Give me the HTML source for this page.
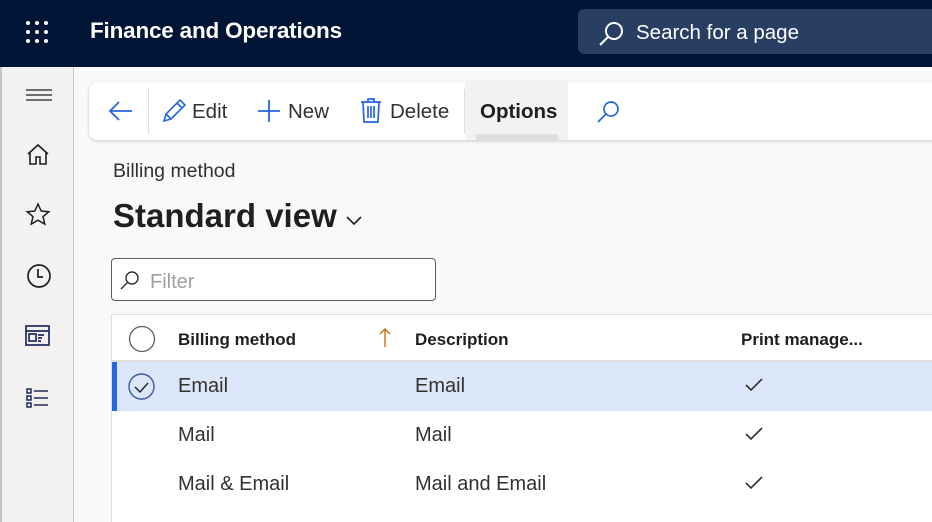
<!DOCTYPE html>
<html><head><style>
*{margin:0;padding:0;box-sizing:border-box}
html,body{width:932px;height:522px;overflow:hidden}
body{background:#faf9f8;font-family:"Segoe UI","Liberation Sans",sans-serif;position:relative;color:#201f1e}
.hdr{position:absolute;left:0;top:0;width:932px;height:67px;background:#001535}
.title{position:absolute;left:90px;top:18px;color:#fff;font-size:22.5px;font-weight:bold;letter-spacing:-0.2px}
.search{position:absolute;left:578px;top:9px;width:360px;height:45px;background:#283f63;border-radius:6px}
.search span{position:absolute;left:58px;top:12px;color:#fff;font-size:20.5px}
.side{position:absolute;left:0;top:67px;width:74px;height:455px;background:#f3f2f1;border-right:1px solid #c8c6c4;border-left:2px solid #c8c6c4}
.tb{position:absolute;left:89px;top:82px;width:860px;height:58px;background:#fff;border-radius:8px 0 0 8px;box-shadow:0 1px 3px rgba(0,0,0,.2)}
.tb .t{position:absolute;top:18px;font-size:20.5px;color:#323130}
.opt{position:absolute;left:376px;top:0;width:103px;height:58px;background:#f3f2f1}
.opt span{position:absolute;left:15px;top:18px;font-size:20.5px;font-weight:bold;color:#201f1e}
.opt i{position:absolute;left:11px;bottom:0;width:82px;height:6px;background:#e1dfdd}
.sep{position:absolute;top:7px;width:1px;height:45px;background:#e1dfdd}
.lbl{position:absolute;left:113px;top:160px;font-size:19.5px;color:#323130}
.view{position:absolute;left:113px;top:197px;font-size:33px;font-weight:bold;color:#201f1e}
.filter{position:absolute;left:111px;top:258px;width:325px;height:43px;border:1px solid #605e5c;border-radius:4px;background:#fff}
.filter span{position:absolute;left:38px;top:12px;font-size:20px;color:#a19f9d}
.grid{position:absolute;left:111px;top:314px;width:830px;height:220px;background:#fff;border-left:1px solid #e1dfdd;border-top:1px solid #e1dfdd}
.row{position:absolute;left:0;width:830px;height:49px}
.row span{position:absolute;top:13px;font-size:20px;color:#323130}
.hrow{top:0;height:47px;border-bottom:2px solid #e1dfdd}
.hrow span{font-weight:bold;font-size:17px;top:15px;color:#201f1e}
.sel{background:#dbe6f8}
.sel:before{content:"";position:absolute;left:0;top:0;width:5px;height:49px;background:#2266e3}
.chk{position:absolute;left:632px;top:15px}
</style></head><body>
<div class="hdr">
<svg style="position:absolute;left:25px;top:20px" width="24" height="24" viewBox="0 0 24 24" fill="#fff"><circle cx="3" cy="3" r="2"/><circle cx="12" cy="3" r="2"/><circle cx="21" cy="3" r="2"/><circle cx="3" cy="12" r="2"/><circle cx="12" cy="12" r="2"/><circle cx="21" cy="12" r="2"/><circle cx="3" cy="21" r="2"/><circle cx="12" cy="21" r="2"/><circle cx="21" cy="21" r="2"/></svg>
<div class="title">Finance and Operations</div>
<div class="search"><svg style="position:absolute;left:20px;top:12px" width="26" height="26" viewBox="0 0 26 26" fill="none" stroke="#fff" stroke-width="2"><circle cx="16" cy="10" r="8"/><path d="M10 16 2 24"/></svg><span>Search for a page</span></div>
</div>
<div class="side">
<svg style="position:absolute;left:24px;top:22px" width="26" height="12" stroke="#201f1e" stroke-width="1.3"><path d="M0 1h26M0 6h26M0 11h26"/></svg>
<svg style="position:absolute;left:24px;top:76px" width="24" height="22" fill="none" stroke="#201f1e" stroke-width="1.6"><path d="M2 11 12 2l10 9M4 9v12h6v-7h4v7h6V9"/></svg>
<svg style="position:absolute;left:23px;top:135px" width="26" height="24" fill="none" stroke="#201f1e" stroke-width="1.5"><path d="M13 2l3.2 7 7.6.7-5.8 5 1.8 7.4L13 18.2 6.2 22.1 8 14.7 2.2 9.7 9.8 9z"/></svg>
<svg style="position:absolute;left:24px;top:196px" width="26" height="26" fill="none" stroke="#201f1e" stroke-width="1.7"><circle cx="13" cy="13" r="11"/><path d="M12 6v8h5"/></svg>
<svg style="position:absolute;left:23px;top:258px" width="26" height="22" fill="none" stroke="#1f2a5c" stroke-width="1.7"><rect x="1" y="1" width="23" height="19"/><path d="M1 6h23"/><rect x="4" y="9" width="7" height="7"/><path d="M13 10h6M13 13h4M13 16h3"/></svg>
<svg style="position:absolute;left:23px;top:320px" width="26" height="24" fill="none" stroke="#1f2a5c" stroke-width="1.5"><rect x="2" y="2" width="4" height="4"/><rect x="2" y="9" width="4" height="4"/><rect x="2" y="16" width="4" height="4"/><path d="M9 4h14M9 11h14M9 18h14"/></svg>
</div>
<div class="tb">
<svg style="position:absolute;left:18px;top:17px" width="26" height="24" fill="none" stroke="#2266e3" stroke-width="1.8"><path d="M25 12H3M12 3 3 12l9 9"/></svg>
<div class="sep" style="left:59px"></div>
<svg style="position:absolute;left:72px;top:16px" width="26" height="26" fill="none" stroke="#2266e3" stroke-width="1.6"><path d="M3 23l2-7L19 2l5 5-14 14zM5 16l5 5M16 5l5 5"/></svg>
<div class="t" style="left:103px">Edit</div>
<svg style="position:absolute;left:168px;top:17px" width="24" height="24" stroke="#2266e3" stroke-width="1.8"><path d="M12 1v22M1 12h22"/></svg>
<div class="t" style="left:199px">New</div>
<svg style="position:absolute;left:271px;top:15px" width="22" height="27" fill="none" stroke="#2266e3" stroke-width="1.7"><path d="M1 5h20M8 5V2h6v3M3 5l1 20h14l1-20M8 9v12M11 9v12M14 9v12"/></svg>
<div class="t" style="left:301px">Delete</div>
<div class="sep" style="left:375px"></div>
<div class="opt"><span>Options</span><i></i></div>
<svg style="position:absolute;left:507px;top:18px" width="24" height="24" fill="none" stroke="#2266e3" stroke-width="1.7"><circle cx="15" cy="9" r="7"/><path d="M10 14 2 22"/></svg>
</div>
<div class="lbl">Billing method</div>
<div class="view">Standard view<svg style="margin-left:8px" width="18" height="12" fill="none" stroke="#201f1e" stroke-width="1.6"><path d="M2 2l7 7 7-7"/></svg></div>
<div class="filter"><svg style="position:absolute;left:8px;top:11px" width="20" height="20" fill="none" stroke="#323130" stroke-width="1.4"><circle cx="12" cy="8" r="6"/><path d="M8 12 1 19"/></svg><span>Filter</span></div>
<div class="grid">
<div class="row hrow"><svg style="position:absolute;left:16px;top:10px" width="28" height="28" fill="none" stroke="#605e5c" stroke-width="1.3"><circle cx="14" cy="14" r="12.5"/></svg><span style="left:66px">Billing method</span><svg style="position:absolute;left:267px;top:12px" width="12" height="20" fill="none" stroke="#c8700d" stroke-width="1.4"><path d="M6 20V2M1 7l5-5 5 5"/></svg><span style="left:303px">Description</span><span style="left:629px">Print manage...</span></div>
<div class="row sel" style="top:47px"><svg style="position:absolute;left:15px;top:10px" width="29" height="29" fill="none" stroke="#3b5a9e" stroke-width="1.4"><circle cx="14.5" cy="14.5" r="12.5"/><path d="M8 15l5 5 8-9" stroke="#201f1e"/></svg><span style="left:66px">Email</span><span style="left:303px">Email</span><svg class="chk" width="20" height="16" fill="none" stroke="#323130" stroke-width="1.6"><path d="M2 8l5 5 11-11"/></svg></div>
<div class="row" style="top:96px"><span style="left:66px">Mail</span><span style="left:303px">Mail</span><svg class="chk" width="20" height="16" fill="none" stroke="#323130" stroke-width="1.6"><path d="M2 8l5 5 11-11"/></svg></div>
<div class="row" style="top:145px"><span style="left:66px">Mail &amp; Email</span><span style="left:303px">Mail and Email</span><svg class="chk" width="20" height="16" fill="none" stroke="#323130" stroke-width="1.6"><path d="M2 8l5 5 11-11"/></svg></div>
</div>
</body></html>
